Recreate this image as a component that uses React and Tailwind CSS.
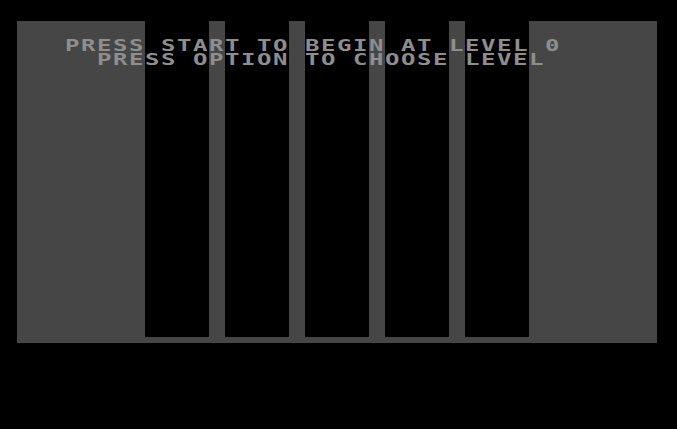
import React from 'react';

// playfield strips, left to right: gray walls with black lanes between
const strips = [
  { w: 'w-[128px]', dark: false },
  { w: 'w-[64px]', dark: true },
  { w: 'w-[16px]', dark: false },
  { w: 'w-[64px]', dark: true },
  { w: 'w-[16px]', dark: false },
  { w: 'w-[64px]', dark: true },
  { w: 'w-[16px]', dark: false },
  { w: 'w-[64px]', dark: true },
  { w: 'w-[16px]', dark: false },
  { w: 'w-[64px]', dark: true },
  { w: 'w-[128px]', dark: false },
];

const lines = [
  '   PRESS START TO BEGIN AT LEVEL 0',
  '     PRESS OPTION TO CHOOSE LEVEL',
];

function App() {
  return (
    <div className="w-[677px] h-[429px] bg-black overflow-hidden pt-[21px] pl-[17px]">
      <div className="relative w-[640px] h-[322px] bg-[#464646] flex flex-col">
        <div className="flex h-[316px]">
          {strips.map((s, i) => (
            <div key={i} className={`${s.w} h-full ${s.dark ? 'bg-black' : 'bg-[#464646]'}`} />
          ))}
        </div>

        {/* title text */}
        <div className="absolute left-0 top-[18px] origin-left scale-x-[1.6] font-['DejaVu_Sans_Mono',monospace] font-bold text-[15px] leading-[14px] tracking-[0.97px] text-[#8e8e8e] whitespace-pre">
          {lines.map((l, i) => (
            <div key={i}>{l}</div>
          ))}
        </div>
      </div>
    </div>
  );
}

export default App;
